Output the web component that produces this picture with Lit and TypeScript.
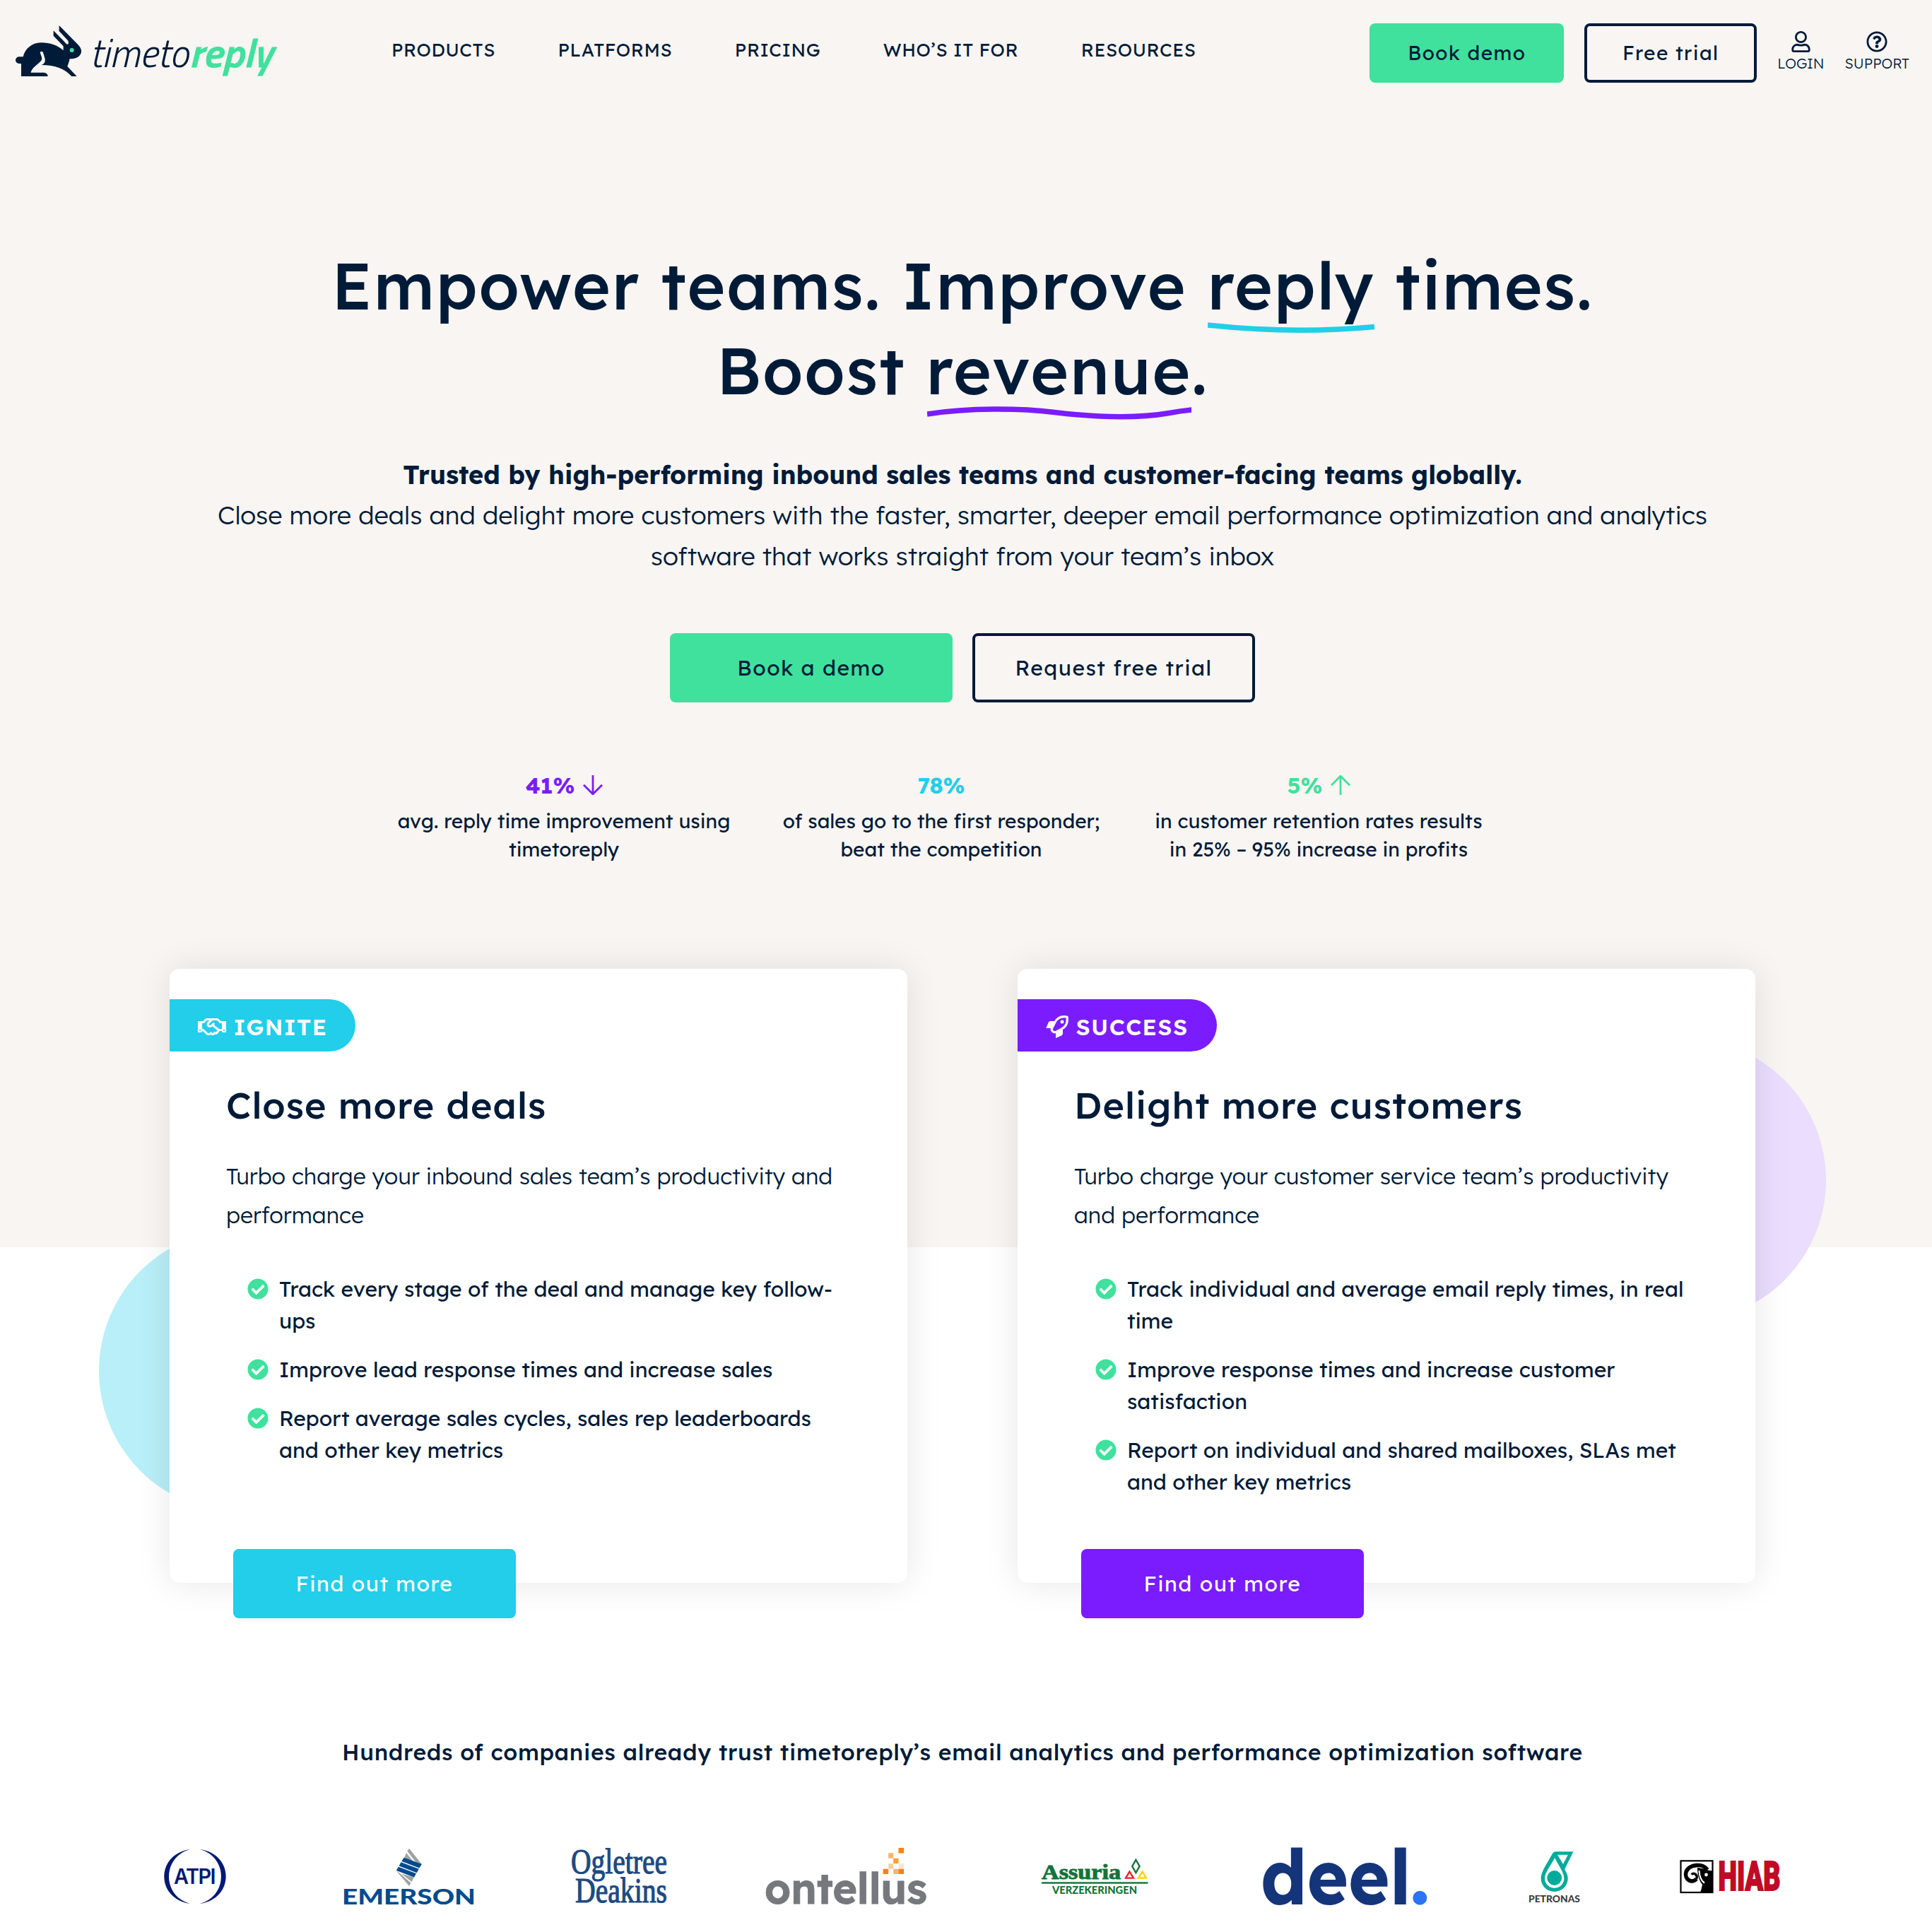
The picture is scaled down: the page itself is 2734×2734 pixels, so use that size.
import { LitElement, html, svg, css } from "lit";
import { customElement, property } from "lit/decorators.js";

const ICONS: Record<string, { box: string; w: number; h: number; art: unknown }> = {
  user: {
    box: "0 0 448 512", w: 27, h: 30,
    art: svg`<path d="M313.6 304c-28.7 0-42.5 16-89.6 16-47.1 0-60.8-16-89.6-16C60.2 304 0 364.2 0 438.4V464c0 26.5 21.5 48 48 48h352c26.5 0 48-21.5 48-48v-25.6c0-74.2-60.2-134.4-134.4-134.4zM400 464H48v-25.6c0-47.6 38.8-86.4 86.4-86.4 14.6 0 38.3 16 89.6 16 51.7 0 74.9-16 89.6-16 47.6 0 86.4 38.8 86.4 86.4V464zM224 288c79.5 0 144-64.5 144-144S303.5 0 224 0 80 64.5 80 144s64.5 144 144 144zm0-240c52.9 0 96 43.1 96 96s-43.1 96-96 96-96-43.1-96-96 43.1-96 96-96z"/>`,
  },
  help: {
    box: "0 0 512 512", w: 30, h: 30,
    art: svg`<path d="M256 8C119.043 8 8 119.083 8 256c0 136.997 111.043 248 248 248s248-111.003 248-248C504 119.083 392.957 8 256 8zm0 448c-110.532 0-200-89.431-200-200 0-110.495 89.472-200 200-200 110.491 0 200 89.471 200 200 0 110.53-89.431 200-200 200zm107.244-255.2c0 67.052-72.421 68.084-72.421 92.863V300c0 6.627-5.373 12-12 12h-45.647c-6.627 0-12-5.373-12-12v-8.659c0-35.745 27.1-50.034 47.579-61.516 17.561-9.845 28.324-16.541 28.324-29.579 0-17.246-21.999-28.693-39.784-28.693-23.189 0-33.894 10.977-48.942 29.969-4.057 5.12-11.46 6.071-16.666 2.124l-27.824-21.098c-5.107-3.872-6.251-11.066-2.644-16.363C184.846 131.491 214.94 112 261.794 112c49.071 0 101.45 38.304 101.45 88.8zM298 368c0 23.159-18.841 42-42 42s-42-18.841-42-42 18.841-42 42-42 42 18.841 42 42z"/>`,
  },
  check: {
    box: "0 0 512 512", w: 30, h: 30,
    art: svg`<path d="M504 256c0 136.967-111.033 248-248 248S8 392.967 8 256 119.033 8 256 8s248 111.033 248 248zM227.314 387.314l184-184c6.248-6.248 6.248-16.379 0-22.627l-22.627-22.627c-6.248-6.249-16.379-6.249-22.628 0L216 308.118l-70.059-70.059c-6.248-6.248-16.379-6.248-22.628 0l-22.627 22.627c-6.248 6.248-6.248 16.379 0 22.627l104 104c6.249 6.249 16.379 6.249 22.628.001z"/>`,
  },
  handshake: {
    box: "0 0 640 512", w: 40, h: 32,
    art: svg`<path d="M519.2 127.9l-47.6-47.6A56.252 56.252 0 0 0 432 64H205.2c-14.8 0-29.1 5.9-39.6 16.3L118 127.9H0v255.7h64c17.6 0 31.8-14.2 31.9-31.7h9.1l84.6 76.4c30.9 25.1 73.8 25.7 105.6 3.8 12.5 10.8 26 15.9 41.1 15.9 18.2 0 35.3-7.4 48.8-24 22.1 8.7 48.2 2.6 64-16.8l26.2-32.3c5.6-6.9 9.1-14.8 10.9-23h57.9c.1 17.5 14.4 31.7 31.9 31.7h64V127.9H519.2zM48 351.6c-8.8 0-16-7.2-16-16s7.2-16 16-16 16 7.2 16 16c0 8.9-7.2 16-16 16zm390-6.9l-26.1 32.2c-2.8 3.4-7.8 4-11.3 1.2l-23.9-19.4-30 36.5c-6 7.3-15 4.8-18 2.4l-36.8-31.5-15.6 19.2c-13.9 17.1-39.2 19.7-55.3 6.6l-97.3-88H96V175.8h41.9l61.7-61.6c2-.8 3.7-1.5 5.7-2.3H262l-38.7 35.5c-29.4 26.9-31.1 72.3-4.4 101.3 14.8 16.2 61.2 41.2 101.5 4.4l8.2-7.5 108.2 87.8c3.4 2.8 3.9 7.9 1.2 11.3zm106-40.8h-69.2c-2.3-2.8-4.9-5.4-7.7-7.7l-102.7-83.4 12.5-11.4c6.5-6 7-16.1 1-22.6L367 167.1c-6-6.5-16.1-6.9-22.6-1l-55.2 50.6c-9.5 8.7-25.7 9.4-34.6 0-9.3-9.9-8.5-25.1 1.2-33.9l65.6-60.1c7.4-6.8 17-10.5 27-10.5l83.7-.2c2.1 0 4.1.8 5.5 2.3l61.7 61.6H544v128zm48 47.7c-8.8 0-16-7.2-16-16s7.2-16 16-16 16 7.2 16 16c0 8.9-7.2 16-16 16z"/>`,
  },
  rocket: {
    box: "0 0 32 32", w: 32, h: 32,
    art: svg`<path d="M0.3 18 3.6 10Q4.4 8 6.6 8H12.6L7.6 18Z"/><path d="M14 32 22 28.4Q24 27.4 24 25.4V19.4L14 24.4Z"/>
      <path d="M30 2C20 .4 15 5 12.4 10.5L8.4 18.5Q7.6 20.4 9.6 22.4 11.6 24.4 13.5 23.6L21.5 19.6C27 17 31.6 12 30 2Z" fill="none" stroke="currentColor" stroke-width="3.2" stroke-linejoin="round"/>
      <circle cx="23" cy="9" r="2.5"/>`,
  },
  down: {
    box: "0 0 28 28", w: 28, h: 28,
    art: svg`<path d="M14 0V26.5M1 13.8 14 26.8 27 13.8" fill="none" stroke="currentColor" stroke-width="2.8"/>`,
  },
  up: {
    box: "0 0 28 28", w: 28, h: 28,
    art: svg`<path d="M14 28V1.5M1 14.2 14 1.2 27 14.2" fill="none" stroke="currentColor" stroke-width="2.8"/>`,
  },
};

@customElement("ttr-icon")
class TtrIcon extends LitElement {
  @property() name = "check";
  static styles = css`
    :host { display: inline-flex; flex: none; }
    svg { display: block; fill: currentColor; }
  `;
  render() {
    const i = ICONS[this.name];
    return html`<svg width=${i.w} height=${i.h} viewBox=${i.box}>${i.art}</svg>`;
  }
}

@customElement("ttr-header")
class TtrHeader extends LitElement {
  static styles = css`
    :host { display: block; }
    .bar { display: flex; align-items: flex-start; height: 117px; padding: 33px 32px 0 20px; }
    .logo { display: block; overflow: visible; }
    .nav { display: flex; gap: 88.5px; margin: 23px 0 0 154px; font-size: 26px; line-height: 30px; letter-spacing: 0.6px; white-space: nowrap; }
    .actions { display: flex; gap: 29px; margin-left: auto; }
    .btn { box-sizing: border-box; height: 84px; border-radius: 8px; display: flex; align-items: center; justify-content: center; padding-bottom: 1px; font-size: 28px; letter-spacing: 1.4px; white-space: nowrap; }
    .fill { width: 275px; background: #3fe19d; }
    .line { width: 244px; border: 4px solid #001b38; }
    .link { display: flex; flex-direction: column; align-items: center; gap: 3px; padding-top: 11px; font-size: 20px; line-height: 25px; font-weight: 300; }
    .thin { font: italic 300 57px "Titillium Web", "Roboto", sans-serif; fill: #001b38; }
    .bold { font: italic 600 57px "Titillium Web", "Roboto", sans-serif; fill: #3fe19d; stroke: #3fe19d; stroke-width: 0.8px; }
  `;
  render() {
    return html`<div class="bar">
      <svg class="logo" width="380" height="84" viewBox="0 0 380 84">
        <g transform="translate(-10 -11) scale(.33333)">
          <path fill="#001b38" d="M60 258V204H51A15 14.5 0 0 1 51 175H68C76 142 104 115 145 115C182 115 214 126 239 148V130L197 86V64L244 112Q253 124 258 122Q264 118 258 106L221 66V42L300 122C314 136 319 150 313 162C306 178 286 184 266 184C263 196 260 206 256 216L296 258H274C245 225 205 211 146 210C160 205 164 194 160 180C157 170 155 164 153 157A6.8 6.8 0 0 0 140 157C144 170 150 179 147 188C142 200 108 216 101 240V242H150C166 242 173 248 173 258Z"/>
          <circle cx="275" cy="147" r="9" fill="#3fe19d"/>
        </g>
        <text class="thin" x="107" y="61.5" textLength="140" lengthAdjust="spacingAndGlyphs">timeto</text>
        <text class="bold" x="248" y="61.5" textLength="118" lengthAdjust="spacingAndGlyphs">reply</text>
      </svg>
      <nav class="nav">
        ${["PRODUCTS", "PLATFORMS", "PRICING", "WHO’S IT FOR", "RESOURCES"].map((t) => html`<span>${t}</span>`)}
      </nav>
      <div class="actions">
        <div class="btn fill">Book demo</div>
        <div class="btn line">Free trial</div>
        <div class="link"><ttr-icon name="user"></ttr-icon>LOGIN</div>
        <div class="link"><ttr-icon name="help"></ttr-icon>SUPPORT</div>
      </div>
    </div>`;
  }
}

@customElement("ttr-hero")
class TtrHero extends LitElement {
  static styles = css`
    :host { display: block; text-align: center; }
    h1 { margin: 193.5px 0 0; font-size: 92px; line-height: 120px; font-weight: 500; letter-spacing: 0.02em; }
    .mark { position: relative; display: inline-block; }
    .mark svg { position: absolute; left: 1px; top: 110px; width: calc(100% - 1px); height: 24px; }
    .lead { width: 2164px; margin: 59px auto 0; font-size: 36px; line-height: 57.6px; font-weight: 300; }
    .lead b { font-weight: 700; }
    .cta { display: flex; justify-content: center; gap: 28px; margin-top: 81px; }
    .btn { box-sizing: border-box; width: 400px; height: 98px; border-radius: 8px; display: flex; align-items: center; justify-content: center; font-size: 30px; letter-spacing: 1.5px; }
    .fill { background: #3fe19d; }
    .line { border: 4px solid #001b38; }
    .stats { display: grid; grid-template-columns: repeat(3, 534px); justify-content: center; padding-right: 60px; margin-top: 97px; }
    .num { display: flex; align-items: center; justify-content: center; gap: 11px; height: 40px; font-size: 32px; font-weight: 700; margin-bottom: 10.5px; }
    .violet { color: #7a1cff; }
    .cyan { color: #22cee9; }
    .green { color: #3fe19d; }
    .cap { font-size: 28px; line-height: 40px; }
  `;
  render() {
    return html`
      <h1>
        Empower teams. Improve
        <span class="mark">reply<svg viewBox="0 0 236 24" preserveAspectRatio="none"><path d="M0 6Q120 19 236 8.5" fill="none" stroke="#22cee9" stroke-width="7.4"/></svg></span>
        times.<br />Boost
        <span class="mark">revenue<svg viewBox="0 0 374 24" preserveAspectRatio="none"><path d="M0 12C60 2.8 130 3.5 180 9.5S290 19.5 342 10.5Q358 7.5 374 6" fill="none" stroke="#7a1cff" stroke-width="7.4"/></svg></span>.
      </h1>
      <div class="lead">
        <b>Trusted by high-performing inbound sales teams and customer-facing teams globally.</b><br />
        Close more deals and delight more customers with the faster, smarter, deeper email performance optimization and analytics software that works straight from your team’s inbox
      </div>
      <div class="cta">
        <div class="btn fill">Book a demo</div>
        <div class="btn line">Request free trial</div>
      </div>
      <div class="stats">
        <div>
          <div class="num violet">41%<ttr-icon name="down"></ttr-icon></div>
          <div class="cap">avg. reply time improvement using<br />timetoreply</div>
        </div>
        <div>
          <div class="num cyan">78%</div>
          <div class="cap">of sales go to the first responder;<br />beat the competition</div>
        </div>
        <div>
          <div class="num green">5%<ttr-icon name="up"></ttr-icon></div>
          <div class="cap">in customer retention rates results<br />in 25% – 95% increase in profits</div>
        </div>
      </div>`;
  }
}

interface Plan { tone: string; icon: string; tag: string; title: string; text: string; points: string[]; }
const PLANS: Plan[] = [
  {
    tone: "cyan", icon: "handshake", tag: "IGNITE", title: "Close more deals",
    text: "Turbo charge your inbound sales team’s productivity and performance",
    points: [
      "Track every stage of the deal and manage key follow-ups",
      "Improve lead response times and increase sales",
      "Report average sales cycles, sales rep leaderboards and other key metrics",
    ],
  },
  {
    tone: "violet", icon: "rocket", tag: "SUCCESS", title: "Delight more customers",
    text: "Turbo charge your customer service team’s productivity and performance",
    points: [
      "Track individual and average email reply times, in real time",
      "Improve response times and increase customer satisfaction",
      "Report on individual and shared mailboxes, SLAs met and other key metrics",
    ],
  },
];

@customElement("ttr-plans")
class TtrPlans extends LitElement {
  static styles = css`
    :host { display: block; }
    .row { position: relative; display: flex; gap: 156px; width: 2244px; margin: 149.3px auto 0; }
    .disc { position: absolute; width: 400px; height: 400px; border-radius: 50%; }
    .left { left: -100px; top: 369px; background: #b9eff8; }
    .right { left: 1944px; top: 99px; background: #eaddfd; }
    .card { position: relative; box-sizing: border-box; display: flex; flex-direction: column; align-items: flex-start; width: 1044px; height: 869px; padding-top: 43px; background: #fff; border-radius: 14px; box-shadow: 0 0 50px rgba(0, 0, 0, 0.1); }
    .tag { box-sizing: border-box; height: 74px; display: flex; align-items: center; gap: 10.5px; padding: 4px 40px 0 40px; border-radius: 0 37px 37px 0; color: #fff; font-size: 32px; font-weight: 600; letter-spacing: 1.4px; }
    .cyan { background: #22cee9; }
    .violet { background: #7a1cff; }
    h2 { margin: 42.5px 80px 0; font-size: 52px; line-height: 66px; font-weight: 500; letter-spacing: 0.02em; }
    p { margin: 40.7px 80px 0; font-size: 32px; line-height: 54.4px; font-weight: 300; }
    ul { list-style: none; display: flex; flex-direction: column; gap: 24px; margin: 55.6px 80px 0; padding: 0 0 0 30px; font-size: 30px; line-height: 45px; }
    li { display: flex; gap: 15px; }
    li ttr-icon { color: #3fe19d; margin-top: 7.5px; height: 30px; }
    .btn { box-sizing: border-box; width: 400px; height: 98px; margin: auto 0 -50px 90px; border-radius: 8px; display: flex; align-items: center; justify-content: center; color: #fff; font-size: 30px; letter-spacing: 1.5px; }
  `;
  render() {
    return html`<div class="row">
      <div class="disc left"></div>
      <div class="disc right"></div>
      ${PLANS.map(
        (p) => html`<section class="card">
          <div class="tag ${p.tone}"><ttr-icon name=${p.icon}></ttr-icon>${p.tag}</div>
          <h2>${p.title}</h2>
          <p>${p.text}</p>
          <ul>${p.points.map((t) => html`<li><ttr-icon name="check"></ttr-icon><span>${t}</span></li>`)}</ul>
          <div class="btn ${p.tone}">Find out more</div>
        </section>`
      )}
    </div>`;
  }
}

const fit = "spacingAndGlyphs";
const BRANDS = [
  { w: 92, art: svg`<g fill="#001a72"><path d="M39 7C-10 14-10 77 39 84C-1 73-1 18 39 7Z"/><path d="M53 7C102 14 102 77 53 84C93 73 93 18 53 7Z"/>
      <text class="atpi" x="16" y="55.5" textLength="58" lengthAdjust=${fit}>ATPI</text></g>` },
  { w: 190, art: svg`<g fill="#9fa4a3"><path d="M95 5.7 113 28.3 109.5 32 92.4 9.8Z"/><path d="M91 12 104 28 88 19Z"/><path d="M76.8 37.6 95 59 97.4 54.5 80.5 39.8Z"/><path d="M84 41.5 98.5 53 102 46.5Z"/></g>
      <g fill="#004b8d"><path d="M87.5 18.7 112.8 28 109.4 33.6 84.4 24Z"/><path d="M83.5 25.3 108.8 34.8 105.8 40.2 80.6 30.6Z"/><path d="M79.8 31.8 105 41.3 102 46.6 76.8 37Z"/>
      <text class="emerson" x="0" y="85" textLength="189" lengthAdjust=${fit}>EMERSON</text></g>` },
  { w: 138, art: svg`<g fill="#1d4a80"><text class="od" x="1" y="40.5" textLength="136" lengthAdjust=${fit}>Ogletree</text><text class="od" x="7" y="81.5" textLength="130" lengthAdjust=${fit}>Deakins</text></g>` },
  { w: 232, art: svg`<text class="ont" fill="#75787d" x="0" y="84" textLength="230" lengthAdjust=${fit}>ontellus</text>
      <g fill="#ff8200"><path d="M189.5 5h7.6v7.4h-7.6zM167.6 34.7h7.6v7.4h-7.6zM189.5 34.7h7.6v7.4h-7.6z"/><path opacity=".6" d="M175.2 12.3h7v7.4h-7zM182.2 34.7h7.3v7.4h-7.3z"/><path opacity=".78" d="M182.2 19.7h7.3v7.4h-7.3z"/><path opacity=".4" d="M175.2 27.3h7v7.4h-7z"/><path opacity=".2" d="M189.5 27.3h7.6v7.4h-7.6z"/></g>` },
  { w: 156, art: svg`<g fill="#12733a"><text class="assu" x="2" y="49.3" textLength="112" lengthAdjust=${fit}>Assuria</text><rect x="2" y="53.3" width="150.5" height="2.4"/>
      <text class="verz" x="17" y="70" textLength="120" lengthAdjust=${fit}>VERZEKERINGEN</text></g>
      <g fill="none" stroke-width="2.4"><path stroke="#12733a" d="M135.4 22 140.6 31 135.4 40 130.2 31Z"/><path stroke="#e6252f" d="M126.5 38.6 132 47.6H121Z"/><path stroke="#fbd30b" d="M144.6 38.6 150 47.6H139Z"/></g>` },
  { w: 236, art: svg`<text class="deel" fill="#15357a" x="-2" y="85" textLength="213" lengthAdjust=${fit}>deel</text><circle cx="223.3" cy="75.7" r="10" fill="#2b74f3"/>` },
  { w: 78, art: svg`<path fill="#00ab9b" fill-rule="evenodd" d="M40 10.3H65.4L53 35.5C56 40 57.7 44 57.7 48A19 19 0 0 1 19.6 48C19.6 43 22 38 25 32L36 13Q37.5 10.3 40 10.3ZM43 14.7 51 28 57.8 14.7ZM39.2 19C34 29 25 40 25 48A13.7 13.7 0 0 0 52.4 48C52.4 40 44 29 39.2 19Z"/>
      <circle cx="38.7" cy="47.5" r="10.4" fill="#00ab9b"/><text class="petro" fill="#3b3b3b" x="2" y="82" textLength="73" lengthAdjust=${fit}>PETRONAS</text>` },
  { w: 146, art: svg`<rect x="2.5" y="23.3" width="45" height="44.7" fill="#fff" stroke="#000" stroke-width="2.2"/>
      <path d="M40 36C34 26 14 28 10 39C7 50 19 56 24.5 49" fill="none" stroke="#000" stroke-width="5.6"/>
      <path d="M24.5 49C27 44 22 39 17.5 42.5" fill="none" stroke="#000" stroke-width="3.4"/>
      <path d="M26 33C26 46 30 53 33 57Q32 63 30 68H48V37Q42 38 38 35Z"/><path d="M28.5 37C29 47 32 52 36 54.5" fill="none" stroke="#fff" stroke-width="2.2"/><circle cx="38.5" cy="43" r="2.4" fill="#fff"/>
      <text class="hiab" fill="#c00a26" x="55.5" y="65.3" textLength="88" lengthAdjust=${fit}>HIAB</text>` },
];

@customElement("ttr-brands")
class TtrBrands extends LitElement {
  static styles = css`
    :host { display: block; }
    h3 { margin: 219px 0 0; text-align: center; font-size: 32px; line-height: 40px; font-weight: 500; letter-spacing: 0.02em; }
    .row { display: grid; grid-template-columns: 254px 323px 275px 390px 314px 375px 215px 146px; margin: 111px 0 0; padding-left: 230px; }
    svg { display: block; overflow: visible; }
    .atpi { font: 600 30px "Inter", sans-serif; letter-spacing: -1.6px; }
    .emerson { font: 900 31px "Lato", sans-serif; }
    .od { font: 400 50px "Liberation Serif", serif; stroke: #1d4a80; stroke-width: 1.2px; }
    .ont { font: 600 60px "Lexend", "Inter", sans-serif; stroke: #75787d; stroke-width: 1px; }
    .assu { font: 700 29px "Liberation Serif", serif; stroke: #12733a; stroke-width: 0.9px; }
    .verz { font: 900 14.5px "Lato", sans-serif; }
    .deel { font: 700 108px "Lexend", "Inter", sans-serif; }
    .petro { font: 900 12.6px "Lato", sans-serif; }
    .hiab { font: 900 57px "Roboto", sans-serif; stroke: #c00a26; stroke-width: 2px; }
  `;
  render() {
    return html`<h3>Hundreds of companies already trust timetoreply’s email analytics and performance optimization software</h3>
      <div class="row">${BRANDS.map((b) => html`<svg width=${b.w} height="90" viewBox="0 0 ${b.w} 90">${b.art}</svg>`)}</div>`;
  }
}

@customElement("app-root")
class AppRoot extends LitElement {
  static styles = css`
    :host { display: block; height: 2734px; overflow: hidden; background: linear-gradient(#f9f5f2 1765px, #fff 1765px); color: #001b38; font-family: "Lexend", "Lexend Deca", "Inter", sans-serif; font-feature-settings: "cv08", "cv11"; }
    .body { width: 2724px; }
  `;
  render() {
    return html`<ttr-header></ttr-header>
      <main class="body"><ttr-hero></ttr-hero><ttr-plans></ttr-plans><ttr-brands></ttr-brands></main>`;
  }
}
